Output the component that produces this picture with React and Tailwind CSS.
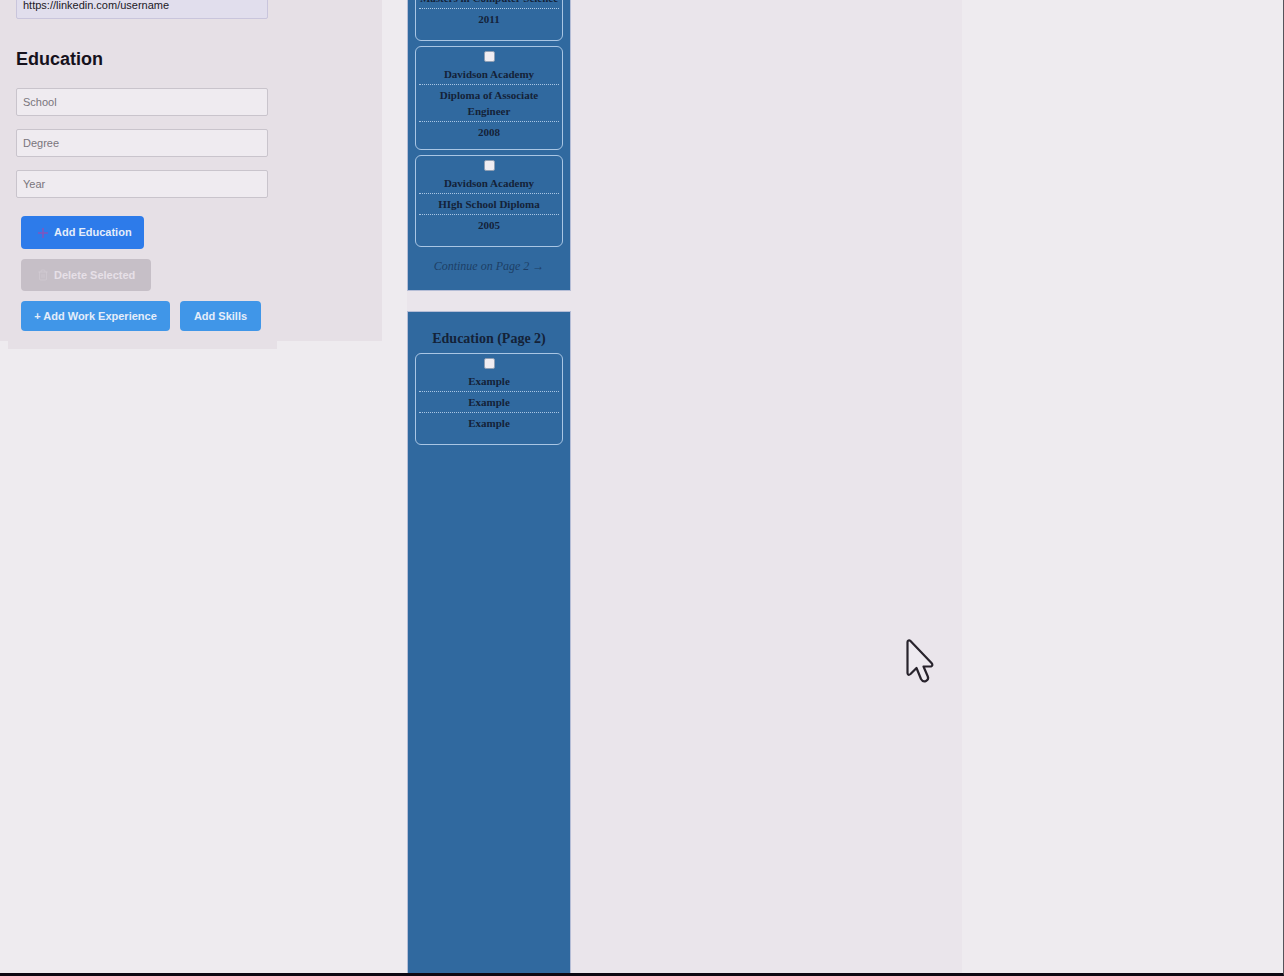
import { Trash2 } from "lucide-react";

const firstPage = [
    ['', 'Masters in Computer Science', '2011'],
    ['Davidson Academy', 'Diploma of Associate Engineer', '2008'],
    ['Davidson Academy', 'HIgh School Diploma', '2005'],
];
const secondPage = [['Example', 'Example', 'Example']];

function EducationCard({ lines }) {
    return (
        <li className="min-h-[92px] rounded-md border border-[#a9c6e4] px-[3px] pt-1 pb-1.5">
            <input
                type="checkbox"
                aria-label={`Select ${lines[1]}`}
                className="mx-auto mb-0.5 block size-[11px] appearance-none rounded-xs border border-[#8f9fb4] bg-[#f0edf2]"
            />
            {lines.map((line, i) => (
                <p
                    key={i}
                    className="min-h-[21px] border-dotted border-[#a9c6e4] py-0.5 text-[11px] leading-4 font-bold not-last:border-b"
                >
                    {line}
                </p>
            ))}
        </li>
    );
}

function Field({ label }) {
    return (
        <input
            type="text"
            aria-label={label}
            placeholder={label}
            className="block h-7 w-full rounded-xs border border-[#c9c4cc] bg-[#efebf0] px-1.5 text-[11px] placeholder:text-[#79757c]"
        />
    );
}

export default function App() {
    return (
        <div className="flex h-screen overflow-hidden border-r border-b-3 border-r-[#55535a] border-b-[#0d0812] bg-[#eeebef] font-['Liberation_Sans',Arial,sans-serif]">
            <aside className="w-[382px] shrink-0 self-start bg-[#e6e0e6]">
                <form className="-mb-2 ml-2 w-[269px] bg-[#e6e0e6] pr-[9px] pb-[18px] pl-2">
                    <input
                        type="url"
                        aria-label="LinkedIn"
                        defaultValue="https://linkedin.com/username"
                        className="-mt-[9px] block h-7 w-full rounded-xs border border-[#c9c5dc] bg-[#e1deed] px-1.5 text-[11px] text-[#1c1926]"
                    />
                    <h2 className="mt-7 mb-[17px] text-[18px] leading-6 font-bold text-[#15111c]">Education</h2>
                    <div className="flex flex-col gap-[13px]">
                        <Field label="School" />
                        <Field label="Degree" />
                        <Field label="Year" />
                    </div>
                    <div className="mt-[18px] ml-[5px] flex flex-col items-start gap-2.5 text-[11px] font-bold text-[#e4edfa]">
                        <button type="button" className="flex h-[33px] w-[123px] items-center rounded bg-[#2d7bea] pl-4 whitespace-nowrap">
                            <svg viewBox="0 0 12 12" className="mr-[5px] size-3" stroke="#8355bd" strokeWidth="1.5">
                                <path d="M6 1v10M1 6h10" />
                            </svg>
                            Add Education
                        </button>
                        <button type="button" disabled className="flex h-8 w-[130px] items-center rounded bg-[#c6bfc7] pl-4 whitespace-nowrap text-[#e6e0e7]">
                            <Trash2 size={12} strokeWidth={1} className="mr-[5px] opacity-50" />
                            Delete Selected
                        </button>
                        <div className="flex gap-2.5">
                            <button type="button" className="h-[30px] w-[149px] rounded bg-[#4096e8] whitespace-nowrap">
                                + Add Work Experience
                            </button>
                            <button type="button" className="h-[30px] w-[81px] rounded bg-[#4096e8] whitespace-nowrap">
                                Add Skills
                            </button>
                        </div>
                    </div>
                </form>
            </aside>

            <main className="ml-[25px] flex-1 bg-[#eae5eb] text-center font-['Liberation_Serif','Times_New_Roman',serif] text-[#142238]">
                <section className="-mt-[59px] w-[164px] border border-[#b5bdd6] bg-[#30699f] p-[7px]">
                    <ul className="flex flex-col gap-[5px]">
                        {firstPage.map((lines, i) => (
                            <EducationCard key={i} lines={lines} />
                        ))}
                    </ul>
                    <p className="mt-2.5 mb-2 text-[12px] leading-[18px] text-[#1d3f66] italic">Continue on Page 2 →</p>
                </section>
                <section className="mt-5 h-full w-[164px] border border-[#b5bdd6] bg-[#30699f] p-[7px]">
                    <h2 className="mt-2.5 mb-1 text-[14px] leading-5 font-bold">Education (Page 2)</h2>
                    <ul className="flex flex-col gap-[5px]">
                        {secondPage.map((lines, i) => (
                            <EducationCard key={i} lines={lines} />
                        ))}
                    </ul>
                </section>
            </main>

            <div className="w-1/4 shrink-0" />

            <svg viewBox="0 0 28 46" className="absolute top-[638px] left-[906px] h-[46px] w-7" fill="#eeeaf0" stroke="#28232c" strokeWidth="2.2" strokeLinejoin="round">
                <path d="M2.500 2.500Q1.500 3 1.500 4V35Q2 38 4.500 36L10.500 30L15 41Q17 44.500 20 43Q23 41.500 21.800 38.500L17.500 28.500H25Q27.500 27.500 25.500 25L4.500 3Q3.500 2 2.500 2.500Z" />
            </svg>
        </div>
    );
}
